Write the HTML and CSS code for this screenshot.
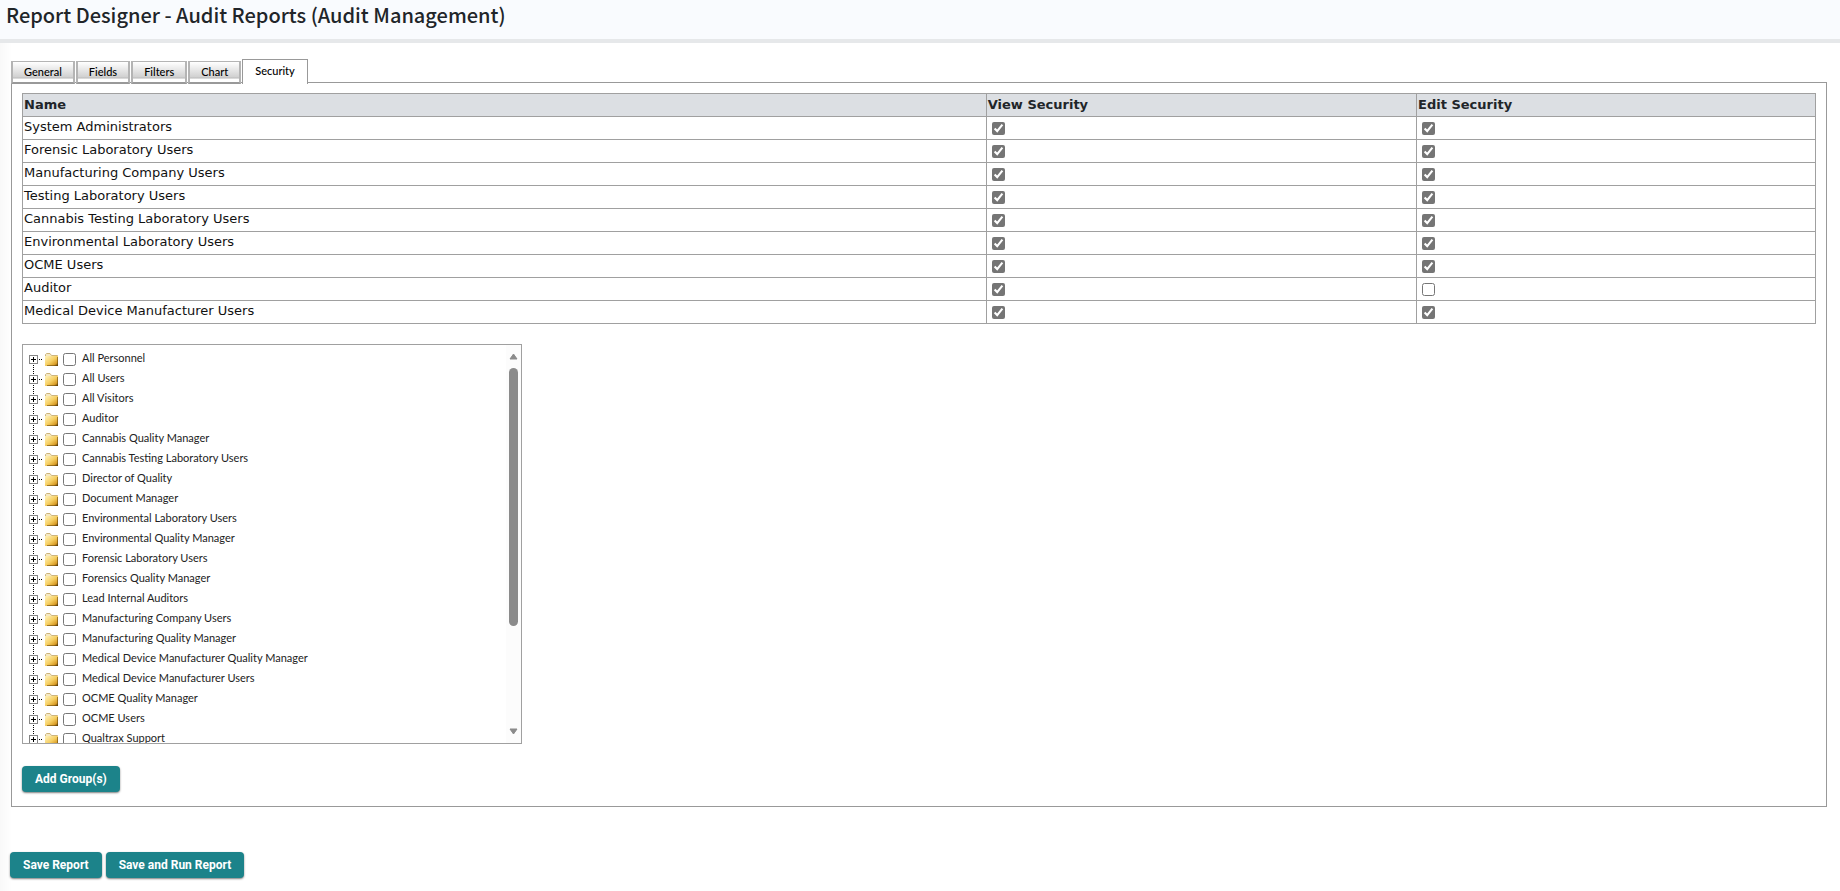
FILE: index.html
```html
<!DOCTYPE html>
<html lang="en">
<head>
    <meta charset="UTF-8">
    <meta name="viewport" content="width=device-width, initial-scale=1.0">
    <title>Report Designer</title>
    <link rel="stylesheet" href="styles.css">
</head>
<body>
    <!-- shared icons -->
    <svg class="icon-defs" width="0" height="0" aria-hidden="true">
        <defs>
            <linearGradient id="folderFill" x1="0" y1="0" x2="1" y2="1">
                <stop offset="0" stop-color="#fff3c0"/>
                <stop offset="0.5" stop-color="#f6cf62"/>
                <stop offset="0.8" stop-color="#d99c26"/>
                <stop offset="1" stop-color="#3a2600"/>
            </linearGradient>
            <symbol id="folder" viewBox="0 0 13 13">
                <path d="M0.5 4V1.5L1.5 0.5H5L6.5 2.5H12.5V5H0.5Z" fill="#f5e9c4" stroke="#cdb57c"/>
                <rect x="0" y="3" width="13" height="10" fill="url(#folderFill)"/>
                <path d="M12.5 4V12.5H2" fill="none" stroke="#6b4a0c" stroke-opacity="0.6"/>
            </symbol>
            <symbol id="plus" viewBox="0 0 9 9">
                <rect x="0.5" y="0.5" width="8" height="8" fill="#fff" stroke="#848484"/>
                <path d="M2 4.5H7M4.5 2V7" stroke="#000"/>
            </symbol>
        </defs>
    </svg>

    <header class="page-header">
        <h1>Report Designer - Audit Reports (Audit Management)</h1>
    </header>

    <main class="content">
        <nav class="tabs">
            <button type="button" class="tab">General</button>
            <button type="button" class="tab">Fields</button>
            <button type="button" class="tab">Filters</button>
            <button type="button" class="tab">Chart</button>
            <button type="button" class="tab active">Security</button>
        </nav>

        <section class="panel">
            <table class="security">
                <thead>
                    <tr><th class="col-name">Name</th><th class="col-view">View Security</th><th>Edit Security</th></tr>
                </thead>
                <tbody id="securityRows"></tbody>
            </table>

            <div class="tree">
                <ul id="groupTree"></ul>
                <div class="scrollbar" aria-hidden="true">
                    <svg width="9" height="7"><path d="M4.5 1L8 6H1Z"/></svg>
                    <div class="thumb"></div>
                    <svg width="9" height="7"><path d="M4.5 6L8 1H1Z"/></svg>
                </div>
            </div>

            <button type="button" class="btn">Add Group(s)</button>
        </section>

        <div class="actions">
            <button type="button" class="btn">Save Report</button>
            <button type="button" class="btn">Save and Run Report</button>
        </div>
    </main>

    <script src="script.js"></script>
</body>
</html>
```
FILE: styles.css
```css
* {
    box-sizing: border-box;
}

body {
    margin: 0;
    background: linear-gradient(to right, #f9f9f9, #fff 12px);
    color: #111;
    font-family: Lato, 'Liberation Sans', sans-serif;
    font-size: 11px;
}

.icon-defs {
    position: absolute;
}

.page-header {
    height: 43px;
    padding: 0 6px;
    background: #f9fbfe;
    border-bottom: 4px solid #e6e8ea;
}

h1 {
    margin: 0;
    color: #212529;
    font-family: 'Noto Sans CJK JP', sans-serif;
    font-size: 20px;
    font-weight: 500;
    line-height: 30px;
}

.content {
    padding: 16px 13px 10px 11px;
}

/* tabs */
.tabs {
    display: flex;
    align-items: flex-end;
    gap: 1px;
    margin-bottom: -2px;
}

.tab {
    height: 23px;
    padding: 0 11px 2px;
    border: 2px solid #b4b4b4;
    border-width: 1px 2px 2px;
    border-bottom-color: #999;
    background: linear-gradient(#fff 0, #d0d0d0 76%, #b4b4b4 80%, #fff 85%);
    color: #000;
    font-family: inherit;
    font-size: 11px;
    font-weight: 500;
}

.tab.active {
    position: relative;
    height: 25px;
    padding: 0 12px 4px;
    border: 1px solid #999;
    border-bottom: 0;
    background: #fff;
}

.panel {
    padding: 10px 10px 14px;
    border: 1px solid #999;
}

/* security table */
.security {
    width: 100%;
    border-collapse: collapse;
    table-layout: fixed;
    font-family: Verdana, 'DejaVu Sans', sans-serif;
    font-size: 13px;
    line-height: 16px;
}

.security th,
.security td {
    height: 23px;
    padding: 0 1px 2px;
    border: 1px solid #a0a0a0;
    text-align: left;
}

.security th {
    padding: 1px;
    background: #dcdfe3;
    color: #212529;
}

.col-name {
    width: 53.75%;
}

.col-view {
    width: 24%;
}

input[type="checkbox"] {
    display: block;
    width: 13px;
    height: 13px;
    margin: 5px 3px 2px 4px;
    accent-color: #757575;
}

/* group tree */
.tree {
    display: flex;
    width: 500px;
    height: 400px;
    margin: 20px 0 22px;
    border: 1px solid #a0a0a0;
}

.tree ul {
    flex: 1;
    margin: 0;
    padding: 4px 0 0 6px;
    list-style: none;
    overflow-y: auto;
    scrollbar-width: none;
}

.tree li {
    display: flex;
    align-items: center;
    height: 20px;
}

.expander {
    display: flex;
    align-items: center;
    position: relative;
    width: 16px;
    height: 20px;
}

/* dotted connectors */
.expander::before {
    content: "";
    position: absolute;
    top: 0;
    left: 4px;
    width: 1px;
    height: 20px;
    background: repeating-linear-gradient(#000 0 1px, transparent 1px 2px);
}

.expander::after {
    content: "";
    width: 5px;
    height: 1px;
    background: repeating-linear-gradient(to right, transparent 0 1px, #000 1px 2px);
}

li:first-child .expander::before {
    top: 10px;
    height: 10px;
}

.plus {
    position: relative;
    width: 9px;
    height: 9px;
}

.folder {
    width: 13px;
    height: 13px;
}

.tree input[type="checkbox"] {
    margin: 0 6px 0 5px;
}

.tree label {
    padding-bottom: 2px;
    color: #222;
    line-height: 16px;
}

.scrollbar {
    display: flex;
    flex-direction: column;
    align-items: center;
    width: 15px;
    padding: 8px 0;
    background: #fcfcfc;
}

.scrollbar svg {
    fill: #8b8b8b;
    stroke: #8b8b8b;
    stroke-linejoin: round;
}

.thumb {
    width: 9px;
    height: 258px;
    margin: 8px 0 auto;
    border-radius: 5px;
    background: #8b8b8b;
}

/* buttons */
.btn {
    display: block;
    height: 26px;
    padding: 0 13px 1px;
    border: 0;
    border-radius: 4px;
    background: #1c838a;
    box-shadow: 0 1px 2px rgba(0,0,0,0.5);
    color: #fff;
    font-family: Roboto, 'Liberation Sans', sans-serif;
    font-size: 12px;
    font-weight: bold;
    cursor: pointer;
}

.actions {
    display: flex;
    gap: 4px;
    margin: 45px 0 0 -1px;
}
```
FILE: script.js
```js
// name, view, edit
const security = [
    ['System Administrators', true, true],
    ['Forensic Laboratory Users', true, true],
    ['Manufacturing Company Users', true, true],
    ['Testing Laboratory Users', true, true],
    ['Cannabis Testing Laboratory Users', true, true],
    ['Environmental Laboratory Users', true, true],
    ['OCME Users', true, true],
    ['Auditor', true, false],
    ['Medical Device Manufacturer Users', true, true]
];

const groups = [
    'All Personnel', 'All Users', 'All Visitors', 'Auditor',
    'Cannabis Quality Manager', 'Cannabis Testing Laboratory Users',
    'Director of Quality', 'Document Manager',
    'Environmental Laboratory Users', 'Environmental Quality Manager',
    'Forensic Laboratory Users', 'Forensics Quality Manager',
    'Lead Internal Auditors', 'Manufacturing Company Users',
    'Manufacturing Quality Manager', 'Medical Device Manufacturer Quality Manager',
    'Medical Device Manufacturer Users', 'OCME Quality Manager',
    'OCME Users', 'Qualtrax Support'
];

function checkCell(label, checked) {
    return `<td><input type="checkbox" aria-label="${label}"${checked ? ' checked' : ''}></td>`;
}

document.getElementById('securityRows').innerHTML = security.map(([name, view, edit]) => `
    <tr>
        <td>${name}</td>
        ${checkCell('View: ' + name, view)}
        ${checkCell('Edit: ' + name, edit)}
    </tr>`).join('');

document.getElementById('groupTree').innerHTML = groups.map((name, i) => `
    <li>
        <span class="expander"><svg class="plus"><use href="#plus"/></svg></span>
        <svg class="folder"><use href="#folder"/></svg>
        <input type="checkbox" id="group${i}">
        <label for="group${i}">${name}</label>
    </li>`).join('');
```
